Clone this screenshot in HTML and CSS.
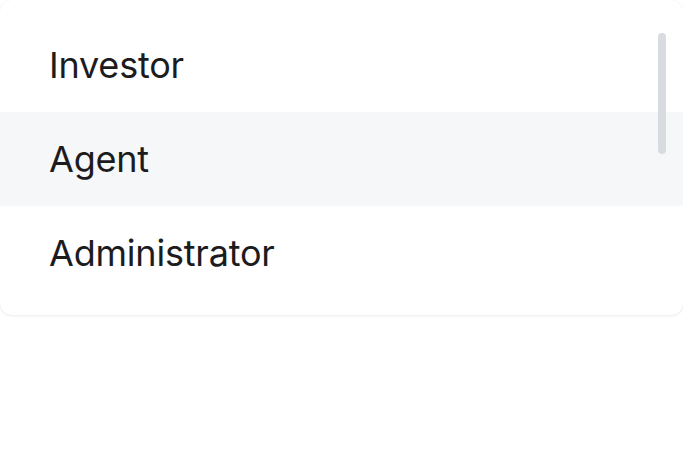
FILE: index.html
```html
<!DOCTYPE html>
<html lang="en">
<head>
<meta charset="utf-8">
<title>Role menu</title>
<link rel="stylesheet" href="styles.css">
</head>
<body>
  <div class="menu">
    <ul class="options">
      <li class="option">Investor</li>
      <li class="option option--active">Agent</li>
      <li class="option">Administrator</li>
    </ul>
    <div class="scrollbar"></div>
  </div>
</body>
</html>
```

FILE: styles.css
```css
html, body {
  margin: 0;
  padding: 0;
  background: #ffffff;
}

body {
  width: 683px;
  height: 456px;
  overflow: hidden;
  font-family: Inter, "Liberation Sans", sans-serif;
}

.menu {
  position: relative;
  box-sizing: border-box;
  width: 683px;
  height: 315px;
  padding: 18px 0 15px;
  background: #ffffff;
  border-radius: 12px;
  box-shadow: 0 1px 3px rgba(0, 0, 0, 0.08), 0 0 1px rgba(0, 0, 0, 0.06);
}

.options {
  list-style: none;
  margin: 0;
  padding: 0;
  display: flex;
  flex-direction: column;
}

.option {
  height: 94px;
  display: flex;
  align-items: center;
  padding-left: 49px;
  font-size: 36px;
  font-weight: 400;
  color: #1c1c1e;
  letter-spacing: -0.2px;
}

.option--active {
  background: #f5f7f9;
}

.scrollbar {
  position: absolute;
  top: 33px;
  right: 17px;
  width: 8px;
  height: 121px;
  border-radius: 4px;
  background: #d8dbe0;
}
```
